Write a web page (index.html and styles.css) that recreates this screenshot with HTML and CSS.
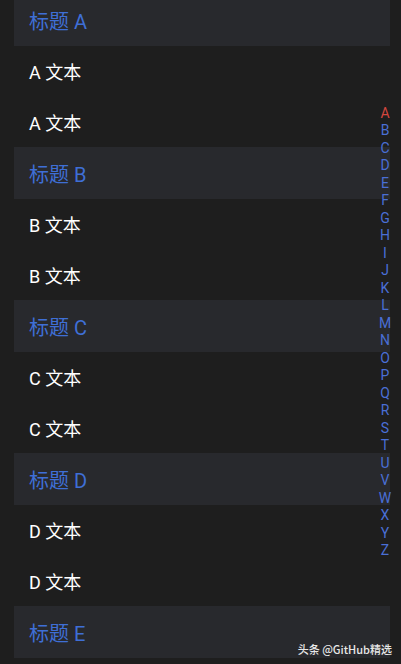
FILE: index.html
```html
<!DOCTYPE html>
<html lang="zh">
<head>
<meta charset="utf-8">
<link rel="stylesheet" href="styles.css">
</head>
<body>
<div class="screen">
  <div class="list">
    <div class="group"><div class="head">标题 A</div><div class="item">A 文本</div><div class="item">A 文本</div></div>
    <div class="group"><div class="head">标题 B</div><div class="item">B 文本</div><div class="item">B 文本</div></div>
    <div class="group"><div class="head">标题 C</div><div class="item">C 文本</div><div class="item">C 文本</div></div>
    <div class="group"><div class="head">标题 D</div><div class="item">D 文本</div><div class="item">D 文本</div></div>
    <div class="group"><div class="head">标题 E</div></div>
  </div>
  <div class="index">
    <span class="letter active">A</span><span class="letter">B</span><span class="letter">C</span><span class="letter">D</span><span class="letter">E</span><span class="letter">F</span><span class="letter">G</span><span class="letter">H</span><span class="letter">I</span><span class="letter">J</span><span class="letter">K</span><span class="letter">L</span><span class="letter">M</span><span class="letter">N</span><span class="letter">O</span><span class="letter">P</span><span class="letter">Q</span><span class="letter">R</span><span class="letter">S</span><span class="letter">T</span><span class="letter">U</span><span class="letter">V</span><span class="letter">W</span><span class="letter">X</span><span class="letter">Y</span><span class="letter">Z</span>
  </div>
  <div class="mark">头条 @GitHub精选</div>
</div>
</body>
</html>
```

FILE: styles.css
```css
html, body {
  margin: 0;
  padding: 0;
  background: #1e1e1e;
}
.screen {
  position: relative;
  width: 401px;
  height: 664px;
  overflow: hidden;
  background: #1e1e1e;
  font-family: Roboto, "Noto Sans CJK SC", sans-serif;
}
.list {
  margin-top: -6px;
  display: flex;
  flex-direction: column;
}
.head {
  margin: 0 11px 0 14px;
  height: 52px;
  padding-left: 15px;
  display: flex;
  align-items: center;
  background: #28292d;
  color: #3f6fd6;
  font-size: 20px;
}
.item {
  height: 50.5px;
  padding-left: 29px;
  display: flex;
  align-items: center;
  color: #ffffff;
  font-size: 18px;
}
.index {
  position: absolute;
  right: 4px;
  top: 0;
  bottom: 0;
  width: 24px;
  display: flex;
  flex-direction: column;
  justify-content: center;
  align-items: center;
}
.letter {
  display: block;
  height: 17.5px;
  line-height: 17.5px;
  font-size: 14px;
  color: #4a6fd6;
  text-align: center;
}
.letter.active {
  color: #d5463f;
}
.mark {
  position: absolute;
  right: 9px;
  bottom: 7px;
  font-size: 11px;
  font-weight: 500;
  color: #e8e8e8;
  font-family: "Noto Sans CJK SC", sans-serif;
}
```
